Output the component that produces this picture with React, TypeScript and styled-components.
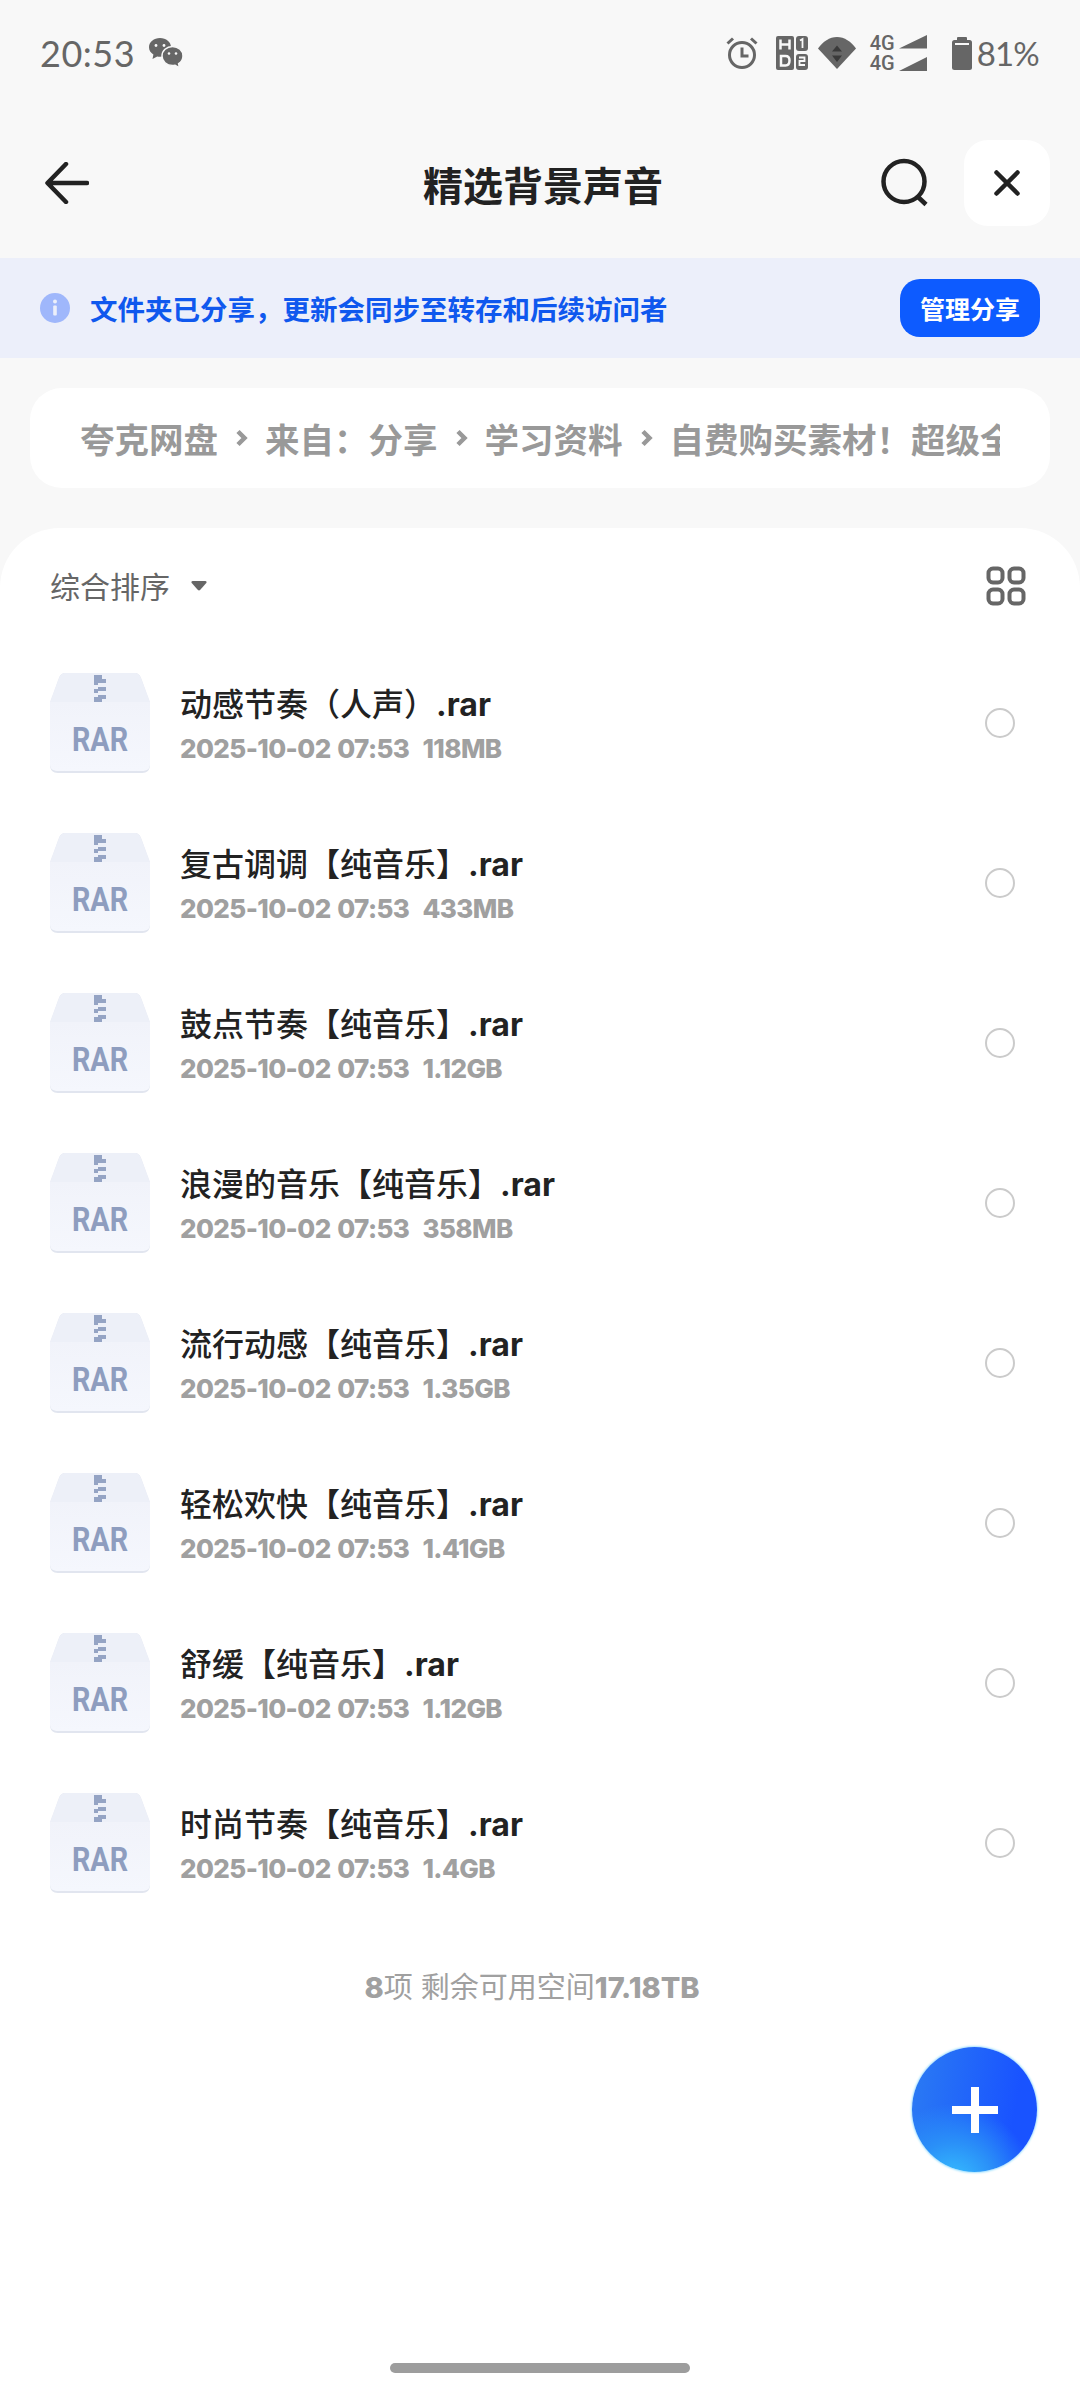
import React from "react";
import styled, { createGlobalStyle } from "styled-components";

const GlobalStyle = createGlobalStyle`
  html, body {
    margin: 0;
    padding: 0;
    background: #f8f8f8;
  }
  * {
    box-sizing: border-box;
  }
`;

const FONT = `Inter, "Noto Sans CJK SC", sans-serif`;

const Page = styled.div`
  position: relative;
  width: 1080px;
  height: 2400px;
  display: flex;
  flex-direction: column;
  overflow: hidden;
  background: #f8f8f8;
  font-family: ${FONT};
`;

const StatusBar = styled.div`
  height: 100px;
  padding: 6px 41px 0 40px;
  display: flex;
  align-items: center;
  justify-content: space-between;
  color: #666;
`;

const StatusGroup = styled.div`
  display: flex;
  align-items: center;
`;

const StatusText = styled.span<{ $size: number; $spacing: number }>`
  font-family: Lato, Inter, sans-serif;
  font-size: ${(p) => p.$size}px;
  font-weight: 400;
  line-height: 40px;
  letter-spacing: ${(p) => p.$spacing}px;
`;

const Header = styled.div`
  height: 158px;
  padding: 8px 30px 0 45px;
  display: flex;
  align-items: center;
`;

const Title = styled.div`
  position: absolute;
  left: 6px;
  right: 0;
  top: 160px;
  text-align: center;
  font-size: 40px;
  line-height: 54px;
  font-weight: 700;
  color: #222;
  pointer-events: none;
`;

const Spacer = styled.div`
  flex: 1;
`;

const CloseButton = styled.div`
  width: 86px;
  height: 86px;
  margin-left: 34px;
  border-radius: 24px;
  background: #fff;
  display: flex;
  align-items: center;
  justify-content: center;
`;

const Banner = styled.div`
  height: 100px;
  padding: 0 40px;
  background: #eceffa;
  display: flex;
  align-items: center;
`;

const BannerText = styled.div`
  flex: 1;
  margin-left: 20px;
  font-size: 27.5px;
  font-weight: 700;
  color: #0f58ee;
  white-space: nowrap;
`;

const ManageButton = styled.div`
  width: 140px;
  height: 58px;
  border-radius: 20px;
  background: #0d5bff;
  color: #fff;
  font-size: 25px;
  font-weight: 700;
  display: flex;
  align-items: center;
  justify-content: center;
`;

const Crumbs = styled.div`
  height: 100px;
  margin: 30px 30px 40px;
  padding: 0 50px;
  border-radius: 32px;
  background: #fff;
  display: flex;
  align-items: center;
`;

const CrumbTrack = styled.div`
  flex: 1;
  display: flex;
  align-items: center;
  overflow: hidden;
  white-space: nowrap;
  font-size: 34.5px;
  font-weight: 700;
  color: #999;
`;

const CrumbSep = styled.svg`
  flex: none;
  width: 12px;
  height: 20px;
  margin: 0 17px 0 18px;
`;

const Sheet = styled.div`
  flex: 1;
  display: flex;
  flex-direction: column;
  border-radius: 60px 60px 0 0;
  background: #fff;
`;

const SortBar = styled.div`
  height: 115px;
  padding: 0 54px 0 50px;
  display: flex;
  align-items: center;
  color: #666;
`;

const SortLabel = styled.span`
  font-size: 30px;
  font-weight: 400;
  margin-top: -2px;
`;

const SortCaret = styled.svg`
  width: 16px;
  height: 11px;
  margin-left: 21px;
`;

const Row = styled.div`
  height: 160px;
  padding: 0 65px 0 50px;
  display: flex;
  align-items: center;
`;

const FileInfo = styled.div`
  flex: 1;
  margin-left: 30px;
  display: flex;
  flex-direction: column;
  gap: 4px;
  margin-top: 4px;
`;

const FileName = styled.div`
  font-size: 32px;
  line-height: 44px;
  font-weight: 500;
  color: #222;
`;

const FileExt = styled.span`
  font-weight: 700;
`;

const FileMeta = styled.div`
  font-size: 26px;
  line-height: 36px;
  font-weight: 800;
  color: #a0a0a0;
  letter-spacing: -0.6px;
  word-spacing: 1.5px;
  white-space: pre;
`;

const Radio = styled.div`
  width: 30px;
  height: 30px;
  border-radius: 50%;
  border: 2.5px solid #cbcbcb;
`;

const Footer = styled.div`
  margin-top: 45px;
  padding-right: 16px;
  text-align: center;
  font-size: 29px;
  line-height: 40px;
  color: #a0a0a0;
`;

const FooterStrong = styled.span`
  font-weight: 800;
`;

const Fab = styled.div`
  position: absolute;
  left: 912px;
  top: 2047px;
  width: 125px;
  height: 125px;
  border-radius: 50%;
  background:
    radial-gradient(circle at 32% 110%, #38c4ff 0%, #2a90f8 26%, rgba(42, 120, 245, 0) 50%),
    linear-gradient(100deg, #2b7cf3 0%, #1953ff 78%);
  box-shadow: 0 0 2px 1px #a6e3ff;
  display: flex;
  align-items: center;
  justify-content: center;
`;

const HomeBar = styled.div`
  position: absolute;
  left: 390px;
  top: 2363px;
  width: 300px;
  height: 10px;
  border-radius: 5px;
  background: #9d9d9d;
`;

const files = [
  { name: "动感节奏（人声）", size: "118MB" },
  { name: "复古调调【纯音乐】", size: "433MB" },
  { name: "鼓点节奏【纯音乐】", size: "1.12GB" },
  { name: "浪漫的音乐【纯音乐】", size: "358MB" },
  { name: "流行动感【纯音乐】", size: "1.35GB" },
  { name: "轻松欢快【纯音乐】", size: "1.41GB" },
  { name: "舒缓【纯音乐】", size: "1.12GB" },
  { name: "时尚节奏【纯音乐】", size: "1.4GB" },
];

const crumbs = ["夸克网盘", "来自：分享", "学习资料", "自费购买素材！超级全的音效素材"];

const WeChatIcon = () => (
  <svg width="36" height="32" viewBox="0 0 36 32" style={{ marginLeft: 13 }}>
    <path d="M12 1C5.900 1 1 5.100 1 10.200c0 3 1.700 5.600 4.400 7.300L4.500 22l4.700-2.600c.9.200 1.900.300 2.800.300 6.100 0 11-4.400 11-9.500S18.100 1 12 1z" fill="#666" />
    <circle cx="8" cy="8.500" r="1.400" fill="#f8f8f8" />
    <circle cx="16" cy="8.500" r="1.400" fill="#f8f8f8" />
    <path d="M24.500 9.500c-6 0-10.500 4.200-10.500 9.500s4.500 9.500 10.500 9.500c.9 0 1.800-.100 2.600-.300l4.400 2.800-.9-4.300c2.900-1.700 4.400-4.500 4.400-7.700 0-5.300-4.500-9.500-10.500-9.500z" fill="#666" stroke="#f8f8f8" strokeWidth="1.500" />
    <circle cx="21" cy="16.500" r="1.300" fill="#f8f8f8" />
    <circle cx="28" cy="16.500" r="1.300" fill="#f8f8f8" />
  </svg>
);

const AlarmIcon = () => (
  <svg width="32" height="34" viewBox="0 0 32 34">
    <circle cx="16" cy="19" r="12.500" fill="none" stroke="#666" strokeWidth="3" />
    <path d="M16 11.500V20h6.500" fill="none" stroke="#666" strokeWidth="3" />
    <path d="M1.500 7.500L7 2.500M30.500 7.500L25 2.500" fill="none" stroke="#666" strokeWidth="3" />
  </svg>
);

const HdIcon = () => (
  <svg width="32" height="34" viewBox="0 0 32 34" style={{ marginLeft: 18 }}>
    <rect x="0" y="0" width="18" height="34" rx="2" fill="#666" />
    <rect x="20" y="0" width="12" height="15" rx="3" fill="#666" />
    <rect x="20" y="18" width="12" height="16" rx="3" fill="#666" />
    <path d="M4.500 3.500v10M13.500 3.500v10M4.500 8.500h9" stroke="#f8f8f8" strokeWidth="2.500" fill="none" />
    <path d="M5 20h4.500c3 0 4 2 4 4.500S12.500 29.500 9.500 29.500H5z" stroke="#f8f8f8" strokeWidth="2.500" fill="none" />
    <path d="M24 4.500l2.500-1.500v9" stroke="#f8f8f8" strokeWidth="1.800" fill="none" />
    <path d="M23 21.500h5.500v3.500h-5v4h5.500" stroke="#f8f8f8" strokeWidth="1.800" fill="none" />
  </svg>
);

const WifiIcon = () => (
  <svg width="38" height="32" viewBox="0 0 38 32" style={{ marginLeft: 10 }}>
    <path d="M0 11.500C5 4.500 11.500 0 19 0s14 4.500 19 11.500L19 32z" fill="#666" />
    <path d="M19 8.500l5 6H14zM19 25l-5-6.500h10z" fill="#3a3a3a" />
  </svg>
);

const SignalIcon = () => (
  <svg width="30" height="36" viewBox="0 0 30 36">
    <path d="M1 13.500L29 0v13.500zM1 36l28-14v14z" fill="#666" />
  </svg>
);

const NetLabel = styled.div`
  margin-left: 14px;
  width: 28px;
  display: flex;
  flex-direction: column;
  font-family: Roboto, sans-serif;
  font-size: 20px;
  line-height: 20px;
  font-weight: 500;
  color: #666;
`;

const BatteryIcon = () => (
  <svg width="20" height="33" viewBox="0 0 20 33" style={{ marginLeft: 24, marginRight: 5 }}>
    <rect x="5" y="0" width="10" height="4" rx="1" fill="#666" />
    <rect x="0" y="3" width="20" height="30" rx="2.500" fill="#666" />
    <rect x="3" y="6" width="14" height="2" fill="#f8f8f8" />
  </svg>
);

const BackIcon = () => (
  <svg width="44" height="42" viewBox="0 0 44 42">
    <path d="M42 21H3M21 2L2.500 21 21 40" fill="none" stroke="#222" strokeWidth="4.500" strokeLinecap="round" strokeLinejoin="round" />
  </svg>
);

const SearchIcon = () => (
  <svg width="50" height="50" viewBox="0 0 50 50">
    <circle cx="24" cy="23.500" r="20.500" fill="none" stroke="#222" strokeWidth="4.500" />
    <path d="M37 38l9 8.500" fill="none" stroke="#222" strokeWidth="4.500" />
  </svg>
);

const CloseIcon = () => (
  <svg width="26" height="26" viewBox="0 0 26 26">
    <path d="M2.500 2.500l21 21M23.500 2.500l-21 21" fill="none" stroke="#222" strokeWidth="4.500" strokeLinecap="round" />
  </svg>
);

const InfoIcon = () => (
  <svg width="30" height="30" viewBox="0 0 30 30">
    <circle cx="15" cy="15" r="15" fill="#9fb7fb" />
    <circle cx="15" cy="8.500" r="2" fill="#eceffa" />
    <rect x="13.200" y="12.500" width="3.600" height="10" rx="1" fill="#eceffa" />
  </svg>
);

const GridIcon = () => (
  <svg width="40" height="40" viewBox="0 0 40 40">
    {[[2.500, 2.500], [23.500, 2.500], [2.500, 23.500], [23.500, 23.500]].map(([x, y]) => (
      <rect key={`${x}-${y}`} x={x} y={y} width="14" height="14" rx="4.500" fill="none" stroke="#666" strokeWidth="4" />
    ))}
  </svg>
);

const RarIcon = () => (
  <svg width="100" height="100" viewBox="0 0 100 100" style={{ flex: "none" }}>
    <defs>
      <linearGradient id="rarBody" x1="0" y1="0" x2="0" y2="1">
        <stop offset="0" stopColor="#f1f3fa" />
        <stop offset="1" stopColor="#f5f7fd" />
      </linearGradient>
    </defs>
    <path d="M16 0h68c4 0 6 2 7 5l9 25v62c0 5-3 8-8 8H8c-5 0-8-3-8-8V30L9 5c1-3 3-5 7-5z" fill="#e1e5ef" />
    <path d="M16 0h68c4 0 6 2 7 5l9 24H0L9 5c1-3 3-5 7-5z" fill="#edf0f8" />
    <path d="M0 29h100v62c0 5-3 7-8 7H8c-5 0-8-2-8-7z" fill="url(#rarBody)" />
    <path d="M44 2h8v4h4v4h-8v4h8v4h-8v4h8v4h-4v3h-8v-5h4v-4h-4v-4h4v-4h-4V6h4V6h-4z" fill="#95a4c4" />
    <text x="50" y="78" textAnchor="middle" textLength="56" lengthAdjust="spacingAndGlyphs" fontFamily="Roboto, sans-serif" fontWeight="700" fontSize="34" fill="#8e9dbf">RAR</text>
  </svg>
);

const PlusIcon = () => (
  <svg width="48" height="48" viewBox="0 0 48 48">
    <path d="M24 1v46M1 24h46" fill="none" stroke="#fff" strokeWidth="8" />
  </svg>
);

export default function App() {
  return (
    <Page>
      <GlobalStyle />
      <StatusBar>
        <StatusGroup>
          <StatusText $size={36} $spacing={0.5}>20:53</StatusText>
          <WeChatIcon />
        </StatusGroup>
        <StatusGroup>
          <AlarmIcon />
          <HdIcon />
          <WifiIcon />
          <NetLabel>
            <span>4G</span>
            <span>4G</span>
          </NetLabel>
          <SignalIcon />
          <BatteryIcon />
          <StatusText $size={33} $spacing={-0.8}>81%</StatusText>
        </StatusGroup>
      </StatusBar>
      <Header>
        <BackIcon />
        <Title>精选背景声音</Title>
        <Spacer />
        <SearchIcon />
        <CloseButton>
          <CloseIcon />
        </CloseButton>
      </Header>
      <Banner>
        <InfoIcon />
        <BannerText>文件夹已分享，更新会同步至转存和后续访问者</BannerText>
        <ManageButton>管理分享</ManageButton>
      </Banner>
      <Crumbs>
        <CrumbTrack>
          {crumbs.map((c, i) => (
            <React.Fragment key={c}>
              {i > 0 && (
                <CrumbSep viewBox="0 0 12 20">
                  <path d="M2 3.500L8.500 10 2 16.500" fill="none" stroke="#999" strokeWidth="4.500" />
                </CrumbSep>
              )}
              <span>{c}</span>
            </React.Fragment>
          ))}
        </CrumbTrack>
      </Crumbs>
      <Sheet>
        <SortBar>
          <SortLabel>综合排序</SortLabel>
          <SortCaret viewBox="0 0 18 12">
            <path d="M2 1h14c1.500 0 2 1.200 1.200 2.200L10.200 11c-.7.700-1.700.700-2.400 0L.8 3.200C0 2.200.5 1 2 1z" fill="#666" />
          </SortCaret>
          <Spacer />
          <GridIcon />
        </SortBar>
        {files.map((f) => (
          <Row key={f.name}>
            <RarIcon />
            <FileInfo>
              <FileName>
                {f.name}
                <FileExt>.rar</FileExt>
              </FileName>
              <FileMeta>{`2025-10-02 07:53  ${f.size}`}</FileMeta>
            </FileInfo>
            <Radio />
          </Row>
        ))}
        <Footer>
          <FooterStrong>8</FooterStrong>项 剩余可用空间<FooterStrong>17.18TB</FooterStrong>
        </Footer>
      </Sheet>
      <Fab>
        <PlusIcon />
      </Fab>
      <HomeBar />
    </Page>
  );
}
